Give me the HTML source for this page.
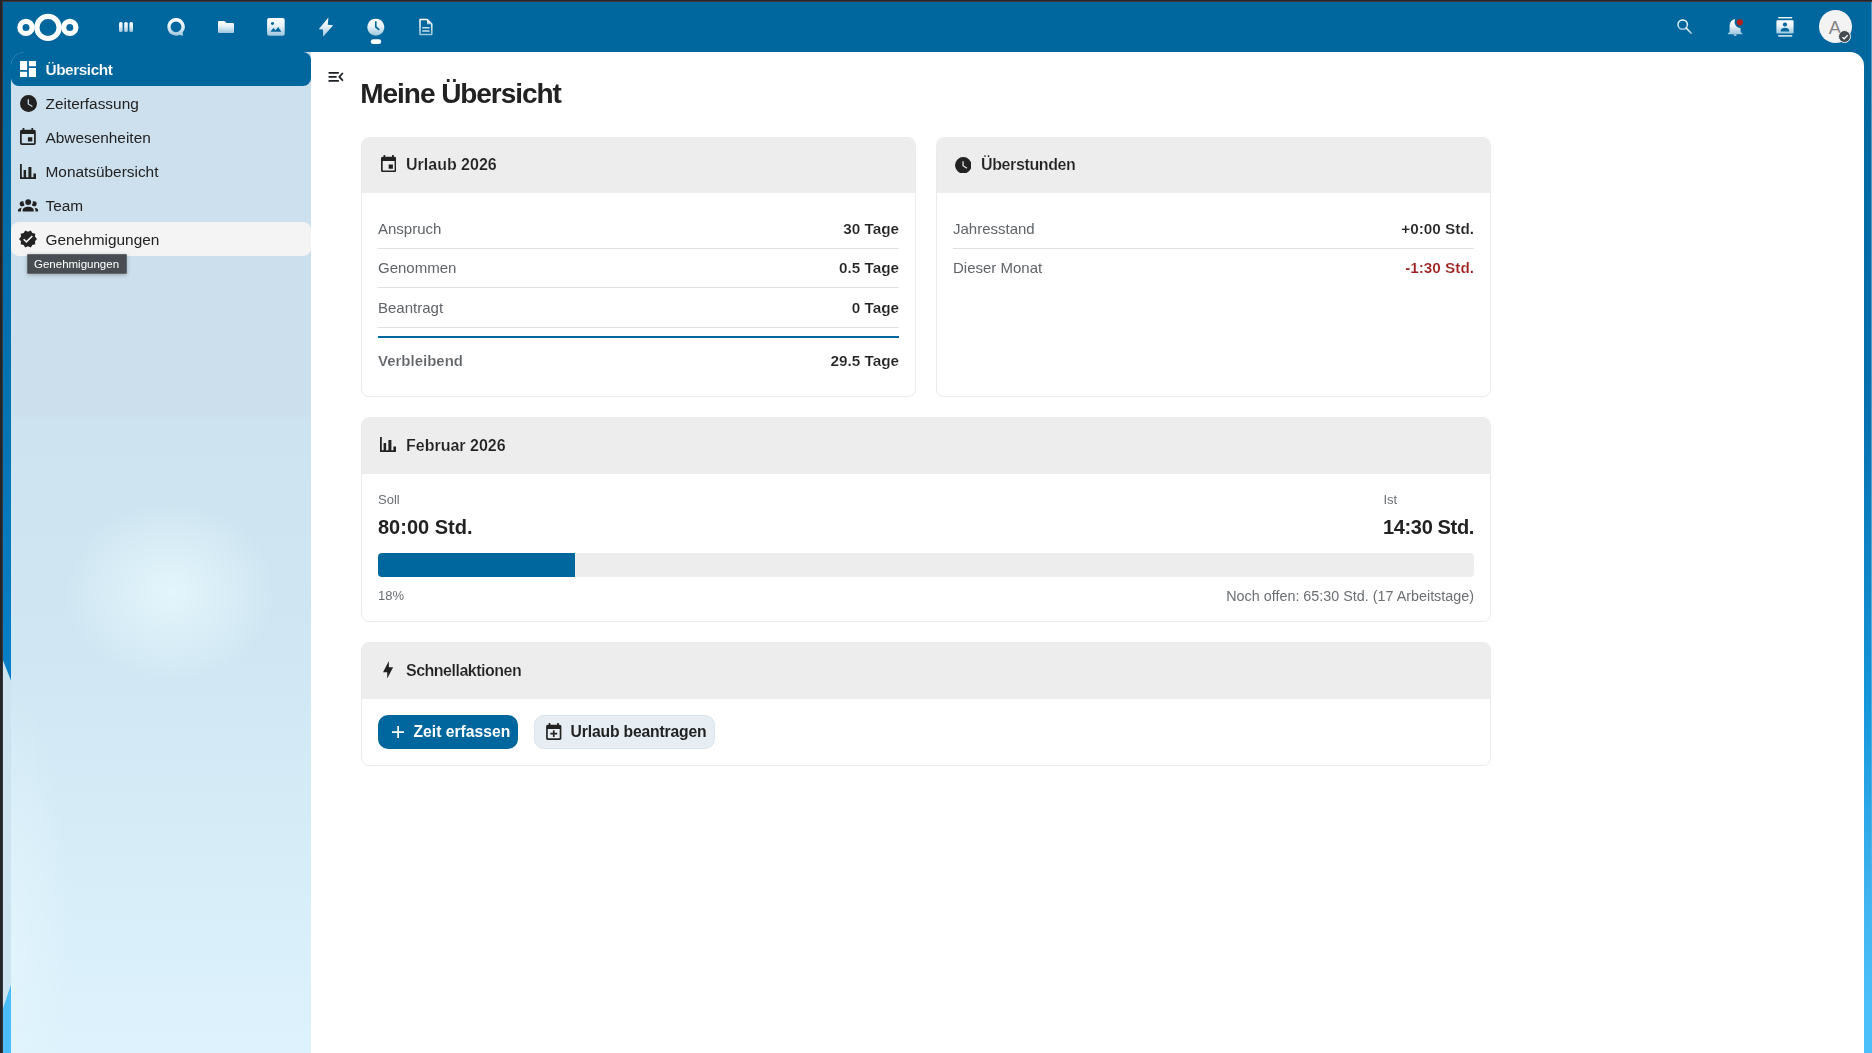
<!DOCTYPE html>
<html><head><meta charset="utf-8">
<style>
*{box-sizing:border-box;margin:0;padding:0}
html,body{width:1872px;height:1053px;overflow:hidden;background:#232428}
body{position:relative;font-family:"Liberation Sans",sans-serif;color:#222}
.abs{position:absolute}
#bg{position:absolute;left:3px;top:2px;right:0;bottom:0;
 background:linear-gradient(180deg,#00679e 0px,#00679e 50px,#0670b0 408px,#1597db 708px,#40b4f0 900px,#4bbff9 1000px)}
#header{position:absolute;left:3px;top:2px;right:0;height:50px;background:#00679e}
#app{will-change:transform;position:absolute;left:11px;top:52px;width:1853px;height:1001px;border-radius:14px 14px 0 0;overflow:hidden}
#nav{position:absolute;left:0;top:0;width:300px;height:100%;
 background:linear-gradient(180deg,#cde0ed 0,#cbdfec 360px,#cde3ef 368px,#d0e7f3 600px,#d8eef9 850px,#ddf2fc 100%)}
#navspot{position:absolute;left:54px;top:450px;width:210px;height:180px;border-radius:50%;
 background:radial-gradient(closest-side,rgba(230,247,253,.9),rgba(230,247,253,.45) 50%,rgba(230,247,253,0))}
#navspot2{position:absolute;left:-60px;top:640px;width:120px;height:500px;border-radius:50%;
 background:radial-gradient(closest-side,rgba(232,248,254,.55),rgba(232,248,254,0))}
#content{position:absolute;left:300px;top:0;right:0;height:100%;background:#fff}
.nitem{position:absolute;left:0;width:300px;height:34px;line-height:34px;font-size:15.4px;color:#222}
.nitem .t{position:absolute;left:34.5px;top:1px}
.nitem svg{position:absolute}
.card{position:absolute;border:1px solid #ebebeb;border-radius:8px;background:#fff;overflow:hidden}
.chead{position:absolute;left:0;top:0;right:0;height:55px;background:#ededed}
.ctitle{position:absolute;left:44px;top:-0.3px;line-height:55px;font-size:16px;font-weight:700;color:#222;-webkit-text-stroke:0.18px #ededed}
.chead svg{position:absolute}
.lbl{position:absolute;left:16px;font-size:15px;color:#606468;line-height:20px}
.val{position:absolute;right:16px;font-size:15.3px;font-weight:700;color:#222;line-height:20px;-webkit-text-stroke:0.18px #fff}
.sep{position:absolute;left:16px;right:16px;height:1px;background:#e0e0e0}
.hicon{position:absolute}
</style></head><body>
<div class="abs" style="left:2px;top:1px;right:0;height:1px;background:#3c373a"></div>
<div class="abs" style="left:2px;top:1px;width:1px;bottom:0;background:#3c373a"></div>
<div id="bg"></div>
<div class="abs" style="left:1871px;top:2px;width:1px;bottom:0;background:linear-gradient(180deg,rgba(255,255,255,.35),rgba(255,255,255,.3) 60%,rgba(255,255,255,0) 90%);z-index:5"></div>
<svg id="leftstrip" class="abs" style="left:0;top:0" width="12" height="1053" viewBox="0 0 12 1053">
  <defs><linearGradient id="lsb" x1="0" y1="52" x2="0" y2="690" gradientUnits="userSpaceOnUse">
    <stop offset="0" stop-color="#00679e"/><stop offset="0.55" stop-color="#0573b3"/><stop offset="1" stop-color="#0a80c8"/></linearGradient></defs>
  <rect x="3" y="52" width="9" height="640" fill="url(#lsb)"/>
  <polygon points="3,660.5 12,683 12,982 3,1009" fill="#cde3ef"/>
  <polygon points="12,982 12,1053 3,1053 3,1009" fill="#4bbcf5"/>
</svg>
<div id="header">
  <!-- logo -->
  <svg class="abs" style="left:0;top:0" width="100" height="50" viewBox="3 2 100 50">
    <g fill="none" stroke="#fff" stroke-width="5.2">
      <circle cx="26" cy="27.4" r="6.1"/>
      <circle cx="48" cy="27.4" r="11.1"/>
      <circle cx="69.8" cy="27.4" r="6.1"/>
    </g>
  </svg>

  <svg class="abs" style="left:0;top:0" width="1869" height="50" viewBox="3 2 1869 50">
    <defs>
      <linearGradient id="hg" x1="0" y1="0" x2="0" y2="1">
        <stop offset="0" stop-color="#ffffff"/>
        <stop offset="0.45" stop-color="#e6f1f7"/>
        <stop offset="1" stop-color="#9cc6de"/>
      </linearGradient>
    </defs>
    <!-- dashboard III -->
    <g fill="url(#hg)">
      <rect x="119" y="22" width="3.6" height="10" rx="1.6"/>
      <rect x="124.2" y="22" width="3.6" height="10" rx="1.6"/>
      <rect x="129.4" y="22" width="3.6" height="10" rx="1.6"/>
    </g>
    <!-- talk -->
    <path fill="url(#hg)" fill-rule="evenodd" d="M176 18 A8.8 8.8 0 1 0 179.6 34.9 L183.2 35.8 L182.6 32.6 A8.8 8.8 0 0 0 176 18 Z M176 21.4 A5.4 5.4 0 1 1 176 32.2 A5.4 5.4 0 1 1 176 21.4 Z"/>
    <!-- folder -->
    <path fill="url(#hg)" d="M218 22 Q218 21 219 21 L224.5 21 L226.5 23 L233 23 Q234 23 234 24 L234 32 Q234 33 233 33 L219 33 Q218 33 218 32 Z"/>
    <!-- photos -->
    <path fill="url(#hg)" fill-rule="evenodd" d="M269.1 18 H282.7 Q284.7 18 284.7 20 V33.7 Q284.7 35.7 282.7 35.7 H269.1 Q267.1 35.7 267.1 33.7 V20 Q267.1 18 269.1 18 Z M272.5 21.9 A1.6 1.6 0 1 0 272.51 21.9 Z M270.4 31.7 L273.4 27.9 L275.6 30.3 L278.2 27.1 L281.4 31.7 Z"/>
    <!-- activity lightning -->
    <path fill="url(#hg)" d="M328.4 17.4 L327.8 24.8 L333.2 25.3 L323.1 36.7 L322.9 29.5 L318.7 29.3 Z"/>
    <!-- clock active -->
    <path fill="url(#hg)" fill-rule="evenodd" d="M375.8 18.7 A8.5 8.5 0 1 0 375.81 18.7 Z M375 21.2 H376.6 V26.6 L379.8 29.2 L378.8 30.4 L375 27.4 Z"/>
    <rect x="370.8" y="39.3" width="10.4" height="4.8" rx="2.4" fill="#fff"/>
    <!-- notes doc -->
    <path fill="none" stroke="url(#hg)" stroke-width="1.5" stroke-linejoin="round" d="M420 19.5 H427.2 L431.8 24.1 V34.4 H420 Z"/>
    <path fill="url(#hg)" d="M427 19.5 L431.8 24.3 L427 24.3 Z"/>
    <rect x="422.2" y="27.2" width="7.4" height="1.4" fill="url(#hg)"/>
    <rect x="422.2" y="30.4" width="7.4" height="1.4" fill="url(#hg)"/>
    <!-- search -->
    <circle cx="1682.7" cy="24.6" r="4.7" fill="none" stroke="url(#hg)" stroke-width="1.5"/>
    <path d="M1686.1 28 L1691.2 33.2" stroke="url(#hg)" stroke-width="1.6" stroke-linecap="round"/>
    <!-- bell -->
    <path fill="url(#hg)" d="M1735 19.2 C1730.8 19.8 1729.6 23.5 1729.6 26.8 V32 L1727.8 33.6 V34.2 H1742.4 V33.6 L1740.6 32 V28.2 C1737.2 28 1734.6 25.3 1734.6 22 C1734.6 21 1734.8 20 1735.2 19.2 Z"/>
    <path fill="url(#hg)" d="M1733.8 34.6 H1736.4 V35.8 H1733.8 Z"/>
    <circle cx="1739.8" cy="22.3" r="3.1" fill="#b3201c"/>
    <!-- contacts -->
    <g fill="url(#hg)">
      <rect x="1778.2" y="17" width="14" height="1.6"/>
      <rect x="1778.2" y="35.2" width="14" height="1.6"/>
      <path fill-rule="evenodd" d="M1777.6 20.2 H1792.6 Q1793.6 20.2 1793.6 21.2 V32.6 Q1793.6 33.6 1792.6 33.6 H1777.4 Q1776.4 33.6 1776.4 32.6 V21.2 Q1776.4 20.2 1777.4 20.2 Z M1785 22.4 A2.1 2.1 0 1 0 1785.01 22.4 Z M1780.8 31.4 H1789.2 V30.6 C1789.2 28.8 1787 27.8 1785 27.8 C1783 27.8 1780.8 28.8 1780.8 30.6 Z"/>
    </g>
  </svg>
  <!-- avatar -->
  <div class="abs" style="left:1815.5px;top:8.4px;width:33px;height:33px;border-radius:50%;background:#f3f3f3;color:#858585;font-size:18.5px;line-height:35px;text-align:center;font-weight:400">A</div>
  <div class="abs" style="left:1835px;top:28px;width:13px;height:13px;border-radius:50%;background:#454b4f;border:1.5px solid #f3f3f3"></div>
  <svg class="abs" style="left:1837.5px;top:30.5px" width="8" height="8" viewBox="0 0 8 8"><path d="M1.5 4.2 L3.2 5.8 L6.6 2.3" fill="none" stroke="#fff" stroke-width="1.3"/></svg>
</div>
<div id="app">
  <div id="nav">
    <div id="navspot"></div><div id="navspot2"></div>
    <div class="abs" style="left:0;top:0;width:300px;height:34px;border-radius:8px;background:#00679e"></div>
    <div class="abs" style="left:0;top:170px;width:300px;height:34px;border-radius:8px;background:#f4f4f4"></div>
    <div class="nitem" style="top:0;color:#fff">
      <svg style="left:9px;top:9px" width="16" height="16" viewBox="3 3 18 18"><path fill="#fff" d="M13,3V9H21V3M13,21H21V11H13M3,21H11V15H3M3,13H11V3H3V13Z"/></svg>
      <span class="t" style="font-weight:700;letter-spacing:-0.45px;-webkit-text-stroke:0.12px #00679e">Übersicht</span></div>
    <div class="nitem" style="top:34px">
      <svg style="left:8.5px;top:8.5px" width="17" height="17" viewBox="2 2 20 20"><path fill="#222" fill-rule="evenodd" d="M12,2A10,10 0 0,0 2,12A10,10 0 0,0 12,22A10,10 0 0,0 22,12A10,10 0 0,0 12,2M16.2,16.2L11,13V7H12.5V12.2L17,14.9L16.2,16.2Z"/></svg>
      <span class="t">Zeiterfassung</span></div>
    <div class="nitem" style="top:68px">
      <svg style="left:9.2px;top:7.7px" width="15.8" height="17" viewBox="3 1 18 20" preserveAspectRatio="none"><path fill="#222" d="M19,19H5V8H19M16,1V3H8V1H6V3H5C3.89,3 3,3.89 3,5V19A2,2 0 0,0 5,21H19A2,2 0 0,0 21,19V5C21,3.89 20.1,3 19,3H18V1M17,12H12V17H17V12Z"/></svg>
      <span class="t">Abwesenheiten</span></div>
    <div class="nitem" style="top:102px">
      <svg style="left:8.7px;top:111.3px;top:9.6px" width="16.5" height="15" viewBox="0 0 16.5 15"><path fill="#222" d="M0 0H1.8V13.3H3.6V5.9H6.1V13.3H8.4V3H11.4V13.3H13.4V9.6H16.5V15H0Z"/></svg>
      <span class="t">Monatsübersicht</span></div>
    <div class="nitem" style="top:136px">
      <svg style="left:6.7px;top:9px" width="20.4" height="17" viewBox="0 3 24 20"><path fill="#222" d="M12,5.5A3.5,3.5 0 0,1 15.5,9A3.5,3.5 0 0,1 12,12.5A3.5,3.5 0 0,1 8.5,9A3.5,3.5 0 0,1 12,5.5M5,8C5.56,8 6.08,8.15 6.53,8.42C6.38,9.850 6.8,11.27 7.66,12.38C7.16,13.34 6.16,14 5,14A3,3 0 0,1 2,11A3,3 0 0,1 5,8M19,8A3,3 0 0,1 22,11A3,3 0 0,1 19,14C17.84,14 16.84,13.34 16.34,12.38C17.2,11.27 17.62,9.85 17.47,8.42C17.92,8.15 18.44,8 19,8M5.5,18.25C5.5,16.18 8.41,14.5 12,14.5C15.59,14.5 18.5,16.180 18.5,18.25V20H5.5V18.25M0,20V18.5C0,17.11 1.89,15.94 4.45,15.6C3.86,16.28 3.5,17.22 3.5,18.25V20H0M24,20H20.5V18.25C20.5,17.22 20.14,16.28 19.55,15.6C22.11,15.94 24,17.11 24,18.5V20Z"/></svg>
      <span class="t">Team</span></div>
    <div class="nitem" style="top:170px">
      <svg style="left:8px;top:8px" width="18" height="18" viewBox="1 1 22 22"><path fill="#222" fill-rule="evenodd" d="M23,12L20.56,9.22L20.9,5.54L17.29,4.72L15.4,1.54L12,3L8.6,1.54L6.71,4.72L3.1,5.53L3.44,9.21L1,12L3.44,14.78L3.1,18.47L6.71,19.29L8.6,22.47L12,21L15.4,22.46L17.29,19.28L20.9,18.46L20.56,14.78L23,12M10,17L6,13L7.41,11.59L10,14.17L16.590,7.58L18,9L10,17Z"/></svg>
      <span class="t">Genehmigungen</span></div>
    <div class="abs" style="left:16px;top:202px;width:100px;height:20px;background:#474d52;border:1px solid #62676b;border-radius:1px;box-shadow:0 1px 4px rgba(0,0,0,.25);color:#fff;font-size:11.5px;line-height:18px;padding-left:6px">Genehmigungen</div>

  </div>
  <div id="content">
    <svg class="abs" style="left:11px;top:14px" width="40" height="30" viewBox="322 66 40 30"><g fill="none" stroke="#1d2024" stroke-width="1.75" stroke-linecap="round" stroke-linejoin="round"><path d="M329.2 72.8H338.2M329.2 76.8H336M329.2 80.9H338.2M342.4 73.5L339.3 76.8L342.4 80.2"/></g></svg>
    <div class="abs" style="left:49.3px;top:27px;font-size:28px;letter-spacing:-1.05px;font-weight:700;line-height:30px;color:#222">Meine Übersicht</div>

    <!-- card 1 -->
    <div class="card" style="left:50px;top:85px;width:555px;height:260px">
      <div class="chead">
        <svg style="left:18.7px;top:17.4px" width="15.3" height="17.1" viewBox="3 1 18 20" preserveAspectRatio="none"><path fill="#222" d="M19,19H5V8H19M16,1V3H8V1H6V3H5C3.89,3 3,3.890 3,5V19A2,2 0 0,0 5,21H19A2,2 0 0,0 21,19V5C21,3.89 20.1,3 19,3H18V1M17,12H12V17H17V12Z"/></svg>
        <div class="ctitle" style="top:-1.3px">Urlaub 2026</div>
      </div>
      <div class="lbl" style="top:81px">Anspruch</div><div class="val" style="top:81px">30 Tage</div>
      <div class="sep" style="top:110px"></div>
      <div class="lbl" style="top:120px">Genommen</div><div class="val" style="top:120px">0.5 Tage</div>
      <div class="sep" style="top:149px"></div>
      <div class="lbl" style="top:160px">Beantragt</div><div class="val" style="top:160px">0 Tage</div>
      <div class="sep" style="top:189px"></div>
      <div class="sep" style="top:198px;height:2px;background:#00679e"></div>
      <div class="lbl" style="top:213px;font-weight:700;-webkit-text-stroke:0.18px #fff">Verbleibend</div><div class="val" style="top:213px">29.5 Tage</div>
    </div>

    <!-- card 2 -->
    <div class="card" style="left:625px;top:85px;width:555px;height:260px">
      <div class="chead">
        <svg style="left:17.7px;top:18.7px" width="16.5" height="16.5" viewBox="2 2 20 20"><path fill="#222" fill-rule="evenodd" d="M12,2A10,10 0 0,0 2,12A10,10 0 0,0 12,22A10,10 0 0,0 22,12A10,10 0 0,0 12,2M16.2,16.2L11,13V7H12.5V12.2L17,14.9L16.2,16.2Z"/></svg>
        <div class="ctitle" style="top:-1.3px;letter-spacing:-0.38px">Überstunden</div>
      </div>
      <div class="lbl" style="top:81px">Jahresstand</div><div class="val" style="top:81px">+0:00 Std.</div>
      <div class="sep" style="top:110px"></div>
      <div class="lbl" style="top:120px">Dieser Monat</div><div class="val" style="top:120px;color:#9c1c1c">-1:30 Std.</div>
    </div>

    <!-- card 3 -->
    <div class="card" style="left:50px;top:365px;width:1130px;height:205px">
      <div class="chead" style="height:56px">
        <svg style="left:17.6px;top:18.9px" width="16.5" height="15" viewBox="0 0 16.5 15"><path fill="#222" d="M0 0H1.8V13.3H3.6V5.9H6.1V13.3H8.4V3H11.4V13.3H13.4V9.6H16.5V15H0Z"/></svg>
        <div class="ctitle">Februar 2026</div>
      </div>
      <div class="abs" style="left:16px;top:74px;font-size:13px;line-height:16px;color:#6b6f73">Soll</div>
      <div class="abs" style="left:16px;top:98px;font-size:20px;line-height:22px;font-weight:700;color:#222">80:00 Std.</div>
      <div class="abs" style="left:1021.4px;top:74px;font-size:13px;line-height:16px;color:#6b6f73">Ist</div>
      <div class="abs" style="left:1016px;top:98px;width:96px;text-align:right;letter-spacing:-0.35px;font-size:20px;line-height:22px;font-weight:700;color:#222">14:30 Std.</div>
      <div class="abs" style="left:16px;top:135px;width:1096px;height:24px;border-radius:4px;background:#ededed;overflow:hidden"><div style="width:197px;height:24px;background:#00679e"></div></div>
      <div class="abs" style="left:16px;top:170px;font-size:13px;line-height:16px;color:#6b6f73">18%</div>
      <div class="abs" style="right:16px;top:169.5px;font-size:14.35px;line-height:16px;color:#6b6f73">Noch offen: 65:30 Std. (17 Arbeitstage)</div>
    </div>

    <!-- card 4 -->
    <div class="card" style="left:50px;top:590px;width:1130px;height:124px">
      <div class="chead" style="height:56px">
        <svg style="left:21px;top:18px" width="10.1" height="17.5" viewBox="6 1 12 22" preserveAspectRatio="none"><path fill="#222" d="M11 15H6L13 1V9H18L11 23V15Z"/></svg>
        <div class="ctitle" style="letter-spacing:-0.5px">Schnellaktionen</div>
      </div>
      <div class="abs" style="left:16px;top:72px;width:140px;height:34px;border-radius:10px;background:#00679e;color:#fff;font-size:15.7px;font-weight:700;line-height:34px">
        <svg class="abs" style="left:13.7px;top:10.8px" width="12.3" height="12.3" viewBox="5 5 14 14"><path fill="#fff" d="M19,13H13V19H11V13H5V11H11V5H13V11H19V13Z"/></svg>
        <span class="abs" style="left:35.5px;top:0">Zeit erfassen</span>
      </div>
      <div class="abs" style="left:172px;top:72px;width:181px;height:34px;border-radius:10px;background:#e6eef4;border:1px solid #dae4eb;color:#222;font-size:15.7px;font-weight:700;line-height:32px">
        <svg class="abs" style="left:11.2px;top:6.7px" width="15.5" height="17" viewBox="3 1 18 20"><path fill="#222" d="M19 19V8H5V19H19M16 1H18V3H19C20.11 3 21 3.9 21 5V19C21 20.11 20.11 21 19 21H5C3.89 21 3 20.1 3 19V5C3 3.89 3.89 3 5 3H6V1H8V3H16V1M11 9.5H13V12.5H16V14.5H13V17.5H11V14.5H8V12.5H11V9.5Z"/></svg>
        <span class="abs" style="left:35.6px;top:0;letter-spacing:-0.16px">Urlaub beantragen</span>
      </div>
    </div>
</div>
</div>
</body></html>
